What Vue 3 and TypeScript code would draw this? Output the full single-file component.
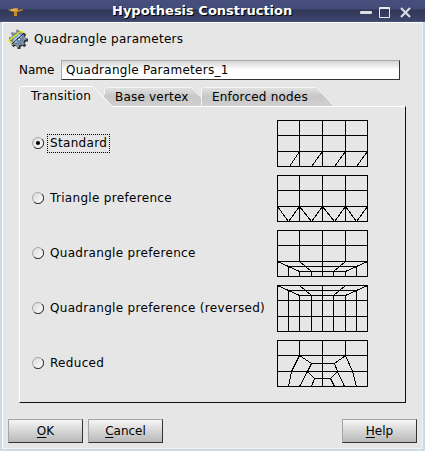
<script setup lang="ts">
import { ref } from 'vue'

interface Choice {
  label: string
  mesh: string
}

const frame = 'M0 0H90V46H0Z'
const grid = 'M0 15H90M0 31H90'
const choices: Choice[] = [
  { label: 'Standard', mesh: `${frame}${grid}M22 0V46M45 0V46M68 0V46M12 46L22 31M34 46L45 31M57 46L68 31M79 46L90 31` },
  { label: 'Triangle preference', mesh: `${frame}${grid}M22 0V46M45 0V46M68 0V46M0 31L11 46L22 31L34 46L45 31L57 46L68 31L79 46L90 31` },
  { label: 'Quadrangle preference', mesh: `${frame}${grid}M22 0V31M45 0V46M68 0V31M11 46V36H79V46M22 46V41H68V46M34 41V46M56 41V46M0 31L22 41M90 31L68 41M22 31L34 41M68 31L56 41` },
  { label: 'Quadrangle preference (reversed)', mesh: `${frame}${grid}M11 46V5H79V46M22 46V10H68V46M34 10V46M45 0V46M56 10V46M0 0L22 10M90 0L68 10M22 0L34 10M68 0L56 10` },
  { label: 'Reduced', mesh: `${frame}${grid}M22 0V15M45 0V46M68 0V15M22 15L34 23H57L68 15M22 15L14 31L11 46M68 15L75 31L79 46M34 23L30 31L22 46M57 23L60 31L67 46M30 31L37 38H53L60 31M37 38L34 46M53 38L57 46` },
]
const tabs = ['Transition', 'Base vertex', 'Enforced nodes']
const selected = ref(0)
const name = ref('Quadrangle Parameters_1')
</script>

<template>
  <div class="window">
    <header class="titlebar">
      <svg class="app-icon" width="18" height="10" viewBox="0 0 18 10">
        <path d="M0 2.5L5 2V1H10V3L13 2.5V4L9 5V9H6V5L2 4Z" fill="#c58a28" />
        <path d="M3 3H9" stroke="#f8d478" />
        <path d="M13 2H15V4H13Z" fill="#8a693c" />
      </svg>
      <h1>Hypothesis Construction</h1>
      <svg class="controls" width="54" height="14" viewBox="0 0 54 14">
        <rect x="1" y="6" width="12" height="3" rx="1" fill="#dcdde2" />
        <path d="M20.5 2.5H30.5V12.5H20.5Z M20 3.5H31" fill="none" stroke="#e9eaf0" />
        <path d="M42 3L51 12M51 3L42 12" stroke="#d9dbe2" stroke-width="2.2" />
      </svg>
    </header>

    <main class="dialog">
      <div class="heading">
        <svg width="20" height="20" viewBox="0 0 20 20">
          <g transform="translate(1 1)" fill="#333638" stroke="#333638">
            <circle cx="10" cy="10" r="6.5" />
            <path d="M10 1V19M1 10H19M3.7 3.7L16.3 16.3M16.3 3.7L3.7 16.3" stroke-width="3" />
          </g>
          <path d="M9.5 .8V18M1 9.5H18M3.5 3.5L15.5 15.5M15.5 3.5L3.5 15.5" stroke="#878f96" stroke-width="3" />
          <circle cx="9.7" cy="9.7" r="6.8" fill="#8b9aa8" />
          <circle cx="9.7" cy="9.7" r="5.2" fill="#78a1d4" stroke="#536d91" />
          <path d="M6 13L13 6" stroke="#b8d4f2" stroke-width="3" />
          <circle cx="11" cy="10.5" r="1.8" fill="#d9e0e6" stroke="#435365" />
          <path d="M5 15L1 12L3 10L13 2L16 4" fill="none" stroke="#eef000" stroke-width="1.3" />
          <path d="M4 15L16 4" stroke="#17242e" />
        </svg>
        <span>Quadrangle parameters</span>
      </div>

      <label class="name-row">
        <span>Name</span>
        <input v-model="name" type="text" />
      </label>

      <nav class="tabs">
        <button class="tab tab-active" type="button">
          <svg width="96" height="21" viewBox="0 0 96 21">
            <path d="M0 21V3Q0 0 3 0H75L94 21Z" fill="#e6e6e6" />
            <path d="M.5 21V3Q.5 .5 3 .5H74.5L93 20.5" fill="none" stroke="#fff" />
          </svg>
          <span>{{ tabs[0] }}</span>
        </button>
        <button v-for="(tab, index) in tabs.slice(1)" :key="tab" class="tab tab-back" type="button">
          <svg :width="index === 0 ? 97 : 134" height="19" :viewBox="index === 0 ? '0 0 97 19' : '0 0 134 19'">
            <defs>
              <linearGradient id="tab-shade" x1="0" y1="0" x2="0" y2="1">
                <stop offset="0" stop-color="#e3e3e3" />
                <stop offset=".5" stop-color="#c7c7c7" />
                <stop offset="1" stop-color="#d0d0d0" />
              </linearGradient>
            </defs>
            <path :d="index === 0 ? 'M0 3Q0 0 3 0H88L97 10V19H0Z' : 'M0 3Q0 0 3 0H115L133 19H0Z'" fill="url(#tab-shade)" />
            <path :d="index === 0 ? 'M.5 8V3Q.5 .5 3 .5H87.5L97 10.5' : 'M.5 19V3Q.5 .5 3 .5H115.5L133 19'" fill="none" stroke="#f4f4f4" />
          </svg>
          <span>{{ tab }}</span>
        </button>
      </nav>

      <section class="panel">
        <label v-for="(choice, index) in choices" :key="choice.label" class="choice">
          <input v-model="selected" type="radio" name="transition" :value="index" />
          <svg class="radio" width="12" height="12" viewBox="0 0 12 12">
            <defs>
              <linearGradient id="radio-shade" x1="0" y1="0" x2="1" y2="1">
                <stop offset="0" stop-color="#d7d7d7" />
                <stop offset="1" stop-color="#fff" />
              </linearGradient>
            </defs>
            <circle cx="6" cy="6" r="5.5" fill="url(#radio-shade)" stroke="#a6a6a6" />
            <path d="M10 2A5.5 5.5 0 0 1 2 10" fill="none" stroke="#353535" />
            <circle v-if="selected === index" cx="6" cy="6" r="2" fill="#000" />
          </svg>
          <span class="choice-label" :class="{ focused: selected === index }">{{ choice.label }}</span>
          <svg class="mesh" width="91" height="47" viewBox="-.5 -.5 91 47">
            <path :d="choice.mesh" />
          </svg>
        </label>
      </section>

      <footer class="actions">
        <button type="button"><u>O</u>K</button>
        <button type="button"><u>C</u>ancel</button>
        <button class="help" type="button"><u>H</u>elp</button>
      </footer>
    </main>
  </div>
</template>

<style>
body { margin: 0; background: #e6e6e6; }
</style>

<style scoped>
* { box-sizing: border-box; }
.window {
  width: 425px;
  height: 451px;
  overflow: hidden;
  display: flex;
  flex-direction: column;
  font: 12px/16px "DejaVu Sans", sans-serif;
  letter-spacing: .27px;
  color: #000;
}
.titlebar {
  height: 22px;
  flex: none;
  display: grid;
  grid-template-columns: 104px 1fr 70px;
  align-items: center;
  background: linear-gradient(#484f7d 0, #434b77 9px, #303655 10px, #3e456c 21px, #51597b 22px);
}
.app-icon { margin: 2px 0 0 8px; }
h1 { margin: 0 0 1px 8px; color: #fff; font-size: 13px; line-height: 18px; letter-spacing: 0; text-shadow: 1px 1px #000; white-space: nowrap; }
.controls { margin-left: 4px; margin-top: 2px; }
.dialog {
  flex: 1;
  display: flex;
  flex-direction: column;
  border: 2px solid #cddae4;
  border-top: 0;
  box-shadow: inset 1px 1px #fff, inset -1px -1px #edf2f5;
  background: #e6e6e6;
}
.heading { display: flex; align-items: center; gap: 6px; height: 20px; margin: 7px 0 0 6px; }
.name-row { display: flex; align-items: center; gap: 6px; height: 20px; margin: 11px 0 0 17px; }
.name-row span { width: 36px; letter-spacing: 0; }
.name-row input {
  width: 339px;
  height: 20px;
  padding: 0 4px;
  border: 1px solid #aaa;
  border-right-color: #333;
  border-bottom-color: #333;
  outline: 0;
  background: linear-gradient(#d4d4d4, #fff 9px);
  font: inherit;
  letter-spacing: inherit;
}
.tabs { display: flex; height: 20px; margin: 6px 0 0 17px; }
.tab { position: relative; flex: none; height: 20px; padding: 0; border: 0; background: none; font: inherit; letter-spacing: .2px; text-align: left; white-space: nowrap; }
.tab svg { position: absolute; top: 0; left: 0; display: block; }
.tab span { position: relative; display: block; }
.tab-active { z-index: 1; width: 85px; padding: 0 0 0 12px; }
.tab-back { width: 97px; padding-left: 11px; }
.tab-back svg { top: 1px; }
.tab-back span { top: 1px; }
.panel {
  width: 387px;
  height: 297px;
  flex: none;
  margin-left: 17px;
  padding-top: 9px;
  border: 1px solid;
  border-color: #fff #111 #111 #fff;
}
.choice { display: flex; align-items: center; height: 55px; padding-left: 12px; }
.choice input { position: absolute; opacity: 0; pointer-events: none; }
.radio { flex: none; margin: 0 3px 1px 0; }
.choice-label { height: 19px; padding: 0 2px; border: 1px solid transparent; white-space: nowrap; letter-spacing: .32px; }
.choice-label.focused { border: 1px dotted #000; }
.mesh { flex: none; margin: 0 37px 1px auto; fill: none; stroke: #000; stroke-width: 1; shape-rendering: crispEdges; }
.actions { display: flex; gap: 5px; margin: 16px 6px 0; }
.actions button {
  width: 75px;
  height: 24px;
  padding: 0;
  border: 1px solid #a5a5a5;
  border-right-color: #333;
  border-bottom-color: #333;
  background: linear-gradient(#f5f5f5, #b8b8b8);
  font: inherit;
}
.actions u { text-underline-offset: 2px; text-decoration-thickness: 1px; text-decoration-skip-ink: none; }
.actions .help { margin-left: auto; }
</style>
